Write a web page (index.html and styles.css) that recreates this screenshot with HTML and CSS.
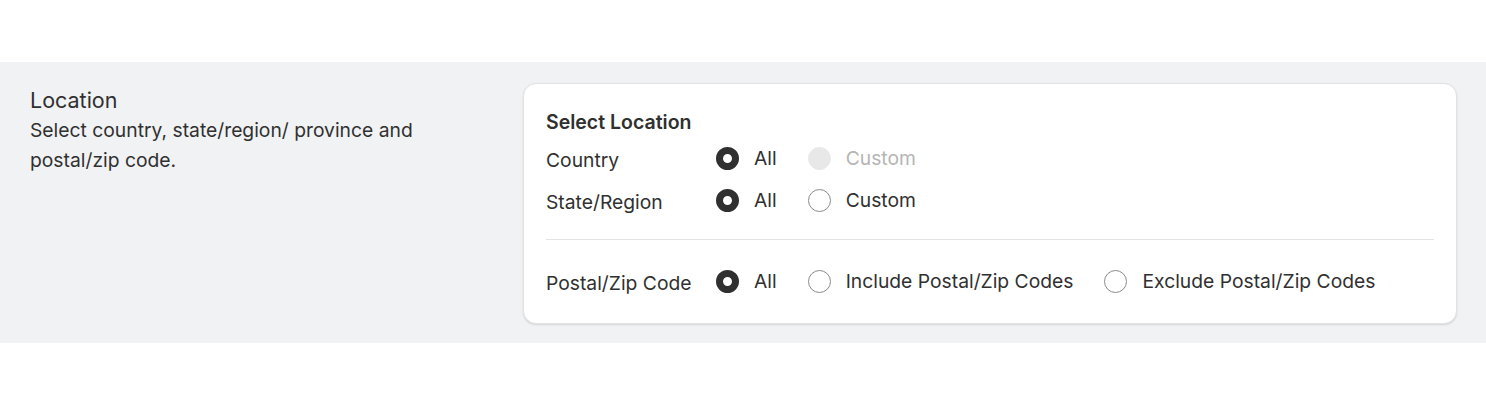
FILE: index.html
```html
<!DOCTYPE html>
<html>
<head>
<meta charset="utf-8">
<link rel="stylesheet" href="styles.css">
</head>
<body>
<div class="page">
  <section class="band">
    <div class="intro">
      <h2 class="intro-title">Location</h2>
      <p class="intro-desc">Select country, state/region/ province and postal/zip code.</p>
    </div>
    <div class="card">
      <h3 class="card-title">Select Location</h3>
      <div class="row">
        <span class="row-label">Country</span>
        <div class="options">
          <label class="opt"><span class="radio checked"></span><span class="opt-text">All</span></label>
          <label class="opt disabled"><span class="radio"></span><span class="opt-text">Custom</span></label>
        </div>
      </div>
      <div class="row">
        <span class="row-label">State/Region</span>
        <div class="options">
          <label class="opt"><span class="radio checked"></span><span class="opt-text">All</span></label>
          <label class="opt"><span class="radio"></span><span class="opt-text">Custom</span></label>
        </div>
      </div>
      <hr class="divider">
      <div class="row">
        <span class="row-label">Postal/Zip Code</span>
        <div class="options">
          <label class="opt"><span class="radio checked"></span><span class="opt-text">All</span></label>
          <label class="opt"><span class="radio"></span><span class="opt-text">Include Postal/Zip Codes</span></label>
          <label class="opt"><span class="radio"></span><span class="opt-text">Exclude Postal/Zip Codes</span></label>
        </div>
      </div>
    </div>
  </section>
</div>
</body>
</html>
```
FILE: styles.css
```css
* { box-sizing: border-box; }
html, body { margin: 0; padding: 0; background: #fff; }
body {
  font-family: Inter, "Noto Sans", "Liberation Sans", sans-serif;
  color: #303030;
}
.page { padding-top: 62px; }
.band {
  background: #f1f2f4;
  display: flex;
  padding: 21px 29px 19px 30px;
  gap: 0;
}
.intro { width: 493px; flex: none; padding-top: 2px; }
.intro-title {
  margin: 0;
  font-size: 21.5px;
  font-weight: 400;
  line-height: 30px;
}
.intro-desc {
  margin: 0;
  font-size: 19.3px;
  line-height: 30px;
  width: 420px;
}
.card {
  flex: 1;
  background: #fff;
  border: 1px solid #e1e2e4;
  border-radius: 13px;
  box-shadow: 0 1px 2px rgba(0,0,0,0.12);
  padding: 26px 22px 22px 22px;
}
.card-title {
  margin: 0 0 4px;
  font-size: 19.5px;
  font-weight: 600;
  line-height: 24px;
}
.row {
  display: flex;
  align-items: center;
  height: 40px;
  font-size: 19.3px;
}
.row + .row { margin-top: 2px; }
.row-label { width: 170px; flex: none; padding-top: 4px; }
.options { display: flex; align-items: center; gap: 31px; }
.opt { display: flex; align-items: center; gap: 15px; }
.radio {
  width: 23px;
  height: 23px;
  border-radius: 50%;
  border: 1px solid #8a8a8a;
  background: #fff;
  flex: none;
}
.radio.checked { border: 7px solid #303030; }
.opt.disabled .radio { border-color: #e8e8e8; background: #e8e8e8; }
.opt.disabled .opt-text { color: #b5b5b5; }
.divider {
  border: 0;
  border-top: 1px solid #e3e3e3;
  margin: 19px 0 21px;
}
```
